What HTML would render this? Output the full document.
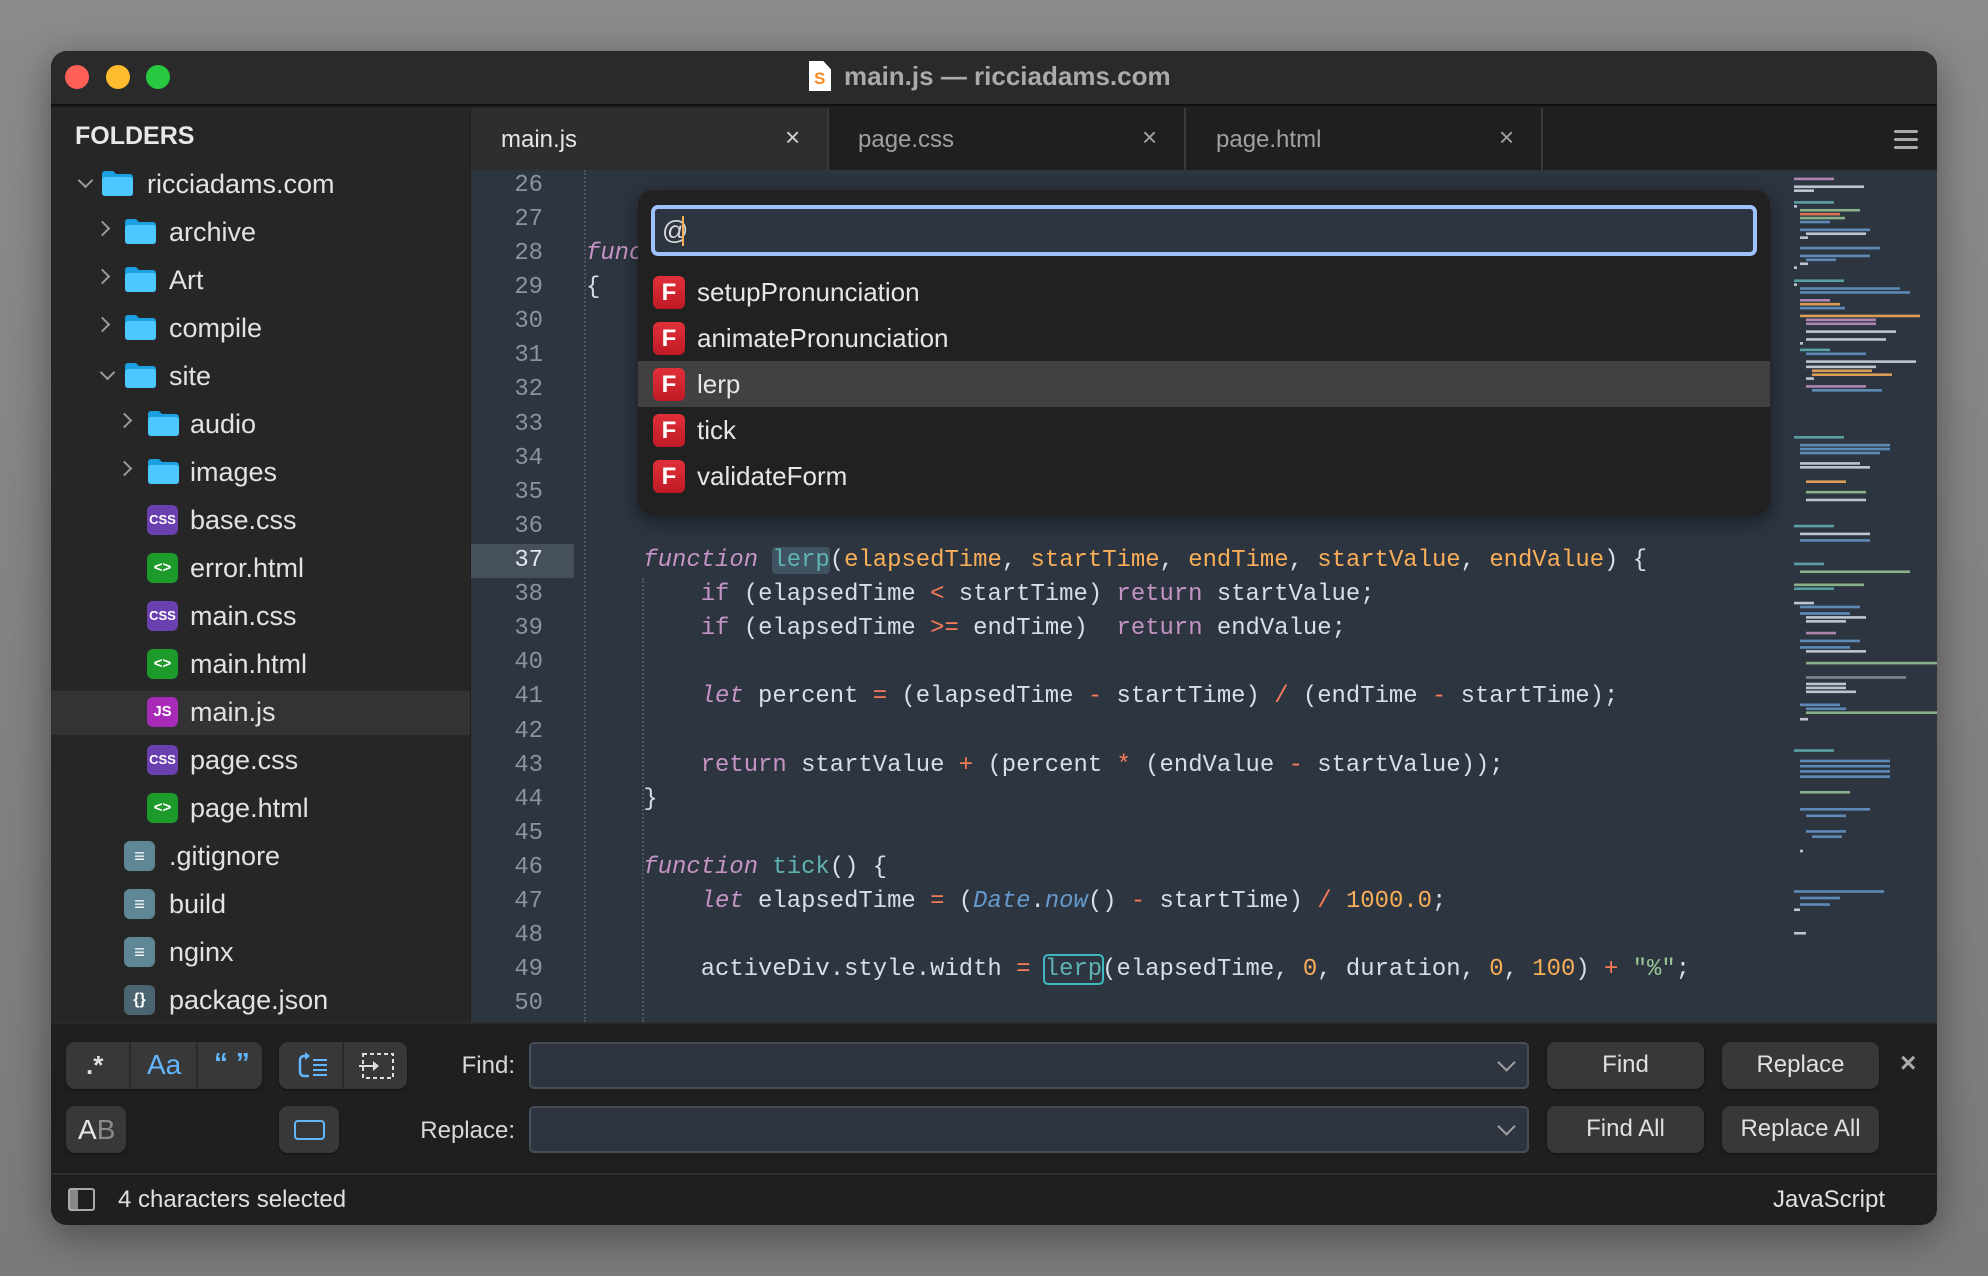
<!DOCTYPE html>
<html><head><meta charset="utf-8"><style>
*{margin:0;padding:0;box-sizing:border-box}
body{width:1988px;height:1276px;background:linear-gradient(#8b8b8b,#7a7a7a);position:relative;overflow:hidden;font-family:"Liberation Sans",sans-serif}
.a{position:absolute}
#win{left:51px;top:51px;width:1886px;height:1174px;border-radius:16px;overflow:hidden;background:#1f1f1f;box-shadow:0 10px 40px rgba(0,0,0,.4)}
.tl{position:absolute;top:14px;width:24px;height:24px;border-radius:50%}
.row{position:absolute;left:0;width:419px;height:44px;color:#e2e2e2;font-size:27px;line-height:44px;white-space:nowrap}
.chev{position:absolute;top:13px;width:11px;height:11px;border-right:2.5px solid #9a9a9a;border-bottom:2.5px solid #9a9a9a}
.fold{position:absolute;top:8px;width:33px;height:26px}
.fic{position:absolute;top:7px;width:31px;height:30px;border-radius:6px;color:#fff;font-size:15px;font-weight:bold;text-align:center;line-height:30px}
.code{position:absolute;left:535px;font-family:"Liberation Mono",monospace;font-size:23.9px;white-space:pre;color:#d8dee9;height:34px;line-height:34px}
.ln{position:absolute;left:420px;width:72px;text-align:right;font-family:"Liberation Mono",monospace;font-size:23.9px;color:#8a949f;height:34px;line-height:34px}
.k{color:#c594c5}.i{font-style:italic}.f{color:#5fb3b3}.p{color:#f9ae58}.o{color:#f97b58}.s{color:#99c794}.b{color:#6699cc}
.item{position:absolute;left:0;width:1132px;height:46px}
.F{position:absolute;left:15px;top:7px;width:32px;height:33px;border-radius:6px;background:linear-gradient(#e0303a,#c01a26);color:#fff;font-weight:bold;font-size:24px;text-align:center;line-height:33px}
.it{position:absolute;left:59px;top:0;line-height:46px;font-size:26px;color:#e6e6e6}
.btn{position:absolute;background:#383838;border-radius:9px;box-shadow:0 1px 2px rgba(0,0,0,.5)}
.tb{position:absolute;background:#383838;border-radius:9px;color:#e0e0e0;font-size:24px;text-align:center;line-height:46px;box-shadow:0 1px 2px rgba(0,0,0,.5)}
.inp{position:absolute;left:478px;width:1000px;height:47px;background:#2e3540;border:2px solid #454d58;border-radius:5px}
.dd{position:absolute;right:14px;top:12px;width:13px;height:13px;border-right:2.5px solid #a0a0a0;border-bottom:2.5px solid #a0a0a0;transform:rotate(45deg)}
.lbl{position:absolute;right:1422px;color:#d8d8d8;font-size:24px}
</style></head><body>
<div id="win" class="a">
 <div class="a" style="left:0;top:0;width:1886px;height:55px;background:#2a2a2a;border-bottom:2px solid #111"></div>
 <div class="tl" style="left:14px;background:#fe5f57"></div>
 <div class="tl" style="left:55px;background:#febc2e"></div>
 <div class="tl" style="left:95px;background:#28c840"></div>
 <div class="a" style="left:758px;top:10px;width:22px;height:30px;background:#fff;clip-path:polygon(0 0,65% 0,100% 28%,100% 100%,0 100%)"></div>
 <div class="a" style="left:763px;top:18px;color:#f58a1f;font-weight:bold;font-size:17px">S</div>
 <div class="a" style="left:793px;top:10px;font-size:26px;font-weight:bold;color:#aaaaaa">main.js — ricciadams.com</div>

 <div class="a" style="left:0;top:57px;width:419px;height:914px;background:#262626"></div>
 <div class="a" style="left:24px;top:71px;font-size:25px;font-weight:bold;color:#e8e8e8">FOLDERS</div>
 <div class="a" style="left:0;top:640px;width:419px;height:44px;background:#333"></div>

 <div class="row" style="top:111px"><div class="chev" style="left:29px;transform:rotate(45deg)"></div><svg class="fold" style="left:50px" viewBox="0 0 33 26"><path d="M1 4a3 3 0 0 1 3-3h8l3 3h14a3 3 0 0 1 3 3v16a3 3 0 0 1-3 3H4a3 3 0 0 1-3-3z" fill="#1a9fe0"/><rect x="1" y="7" width="31" height="19" rx="3" fill="#4dc8ff"/></svg><span style="position:absolute;left:96px">ricciadams.com</span></div>
 <div class="row" style="top:159px"><div class="chev" style="left:46px;transform:rotate(-45deg)"></div><svg class="fold" style="left:73px" viewBox="0 0 33 26"><path d="M1 4a3 3 0 0 1 3-3h8l3 3h14a3 3 0 0 1 3 3v16a3 3 0 0 1-3 3H4a3 3 0 0 1-3-3z" fill="#1a9fe0"/><rect x="1" y="7" width="31" height="19" rx="3" fill="#4dc8ff"/></svg><span style="position:absolute;left:118px">archive</span></div>
 <div class="row" style="top:207px"><div class="chev" style="left:46px;transform:rotate(-45deg)"></div><svg class="fold" style="left:73px" viewBox="0 0 33 26"><path d="M1 4a3 3 0 0 1 3-3h8l3 3h14a3 3 0 0 1 3 3v16a3 3 0 0 1-3 3H4a3 3 0 0 1-3-3z" fill="#1a9fe0"/><rect x="1" y="7" width="31" height="19" rx="3" fill="#4dc8ff"/></svg><span style="position:absolute;left:118px">Art</span></div>
 <div class="row" style="top:255px"><div class="chev" style="left:46px;transform:rotate(-45deg)"></div><svg class="fold" style="left:73px" viewBox="0 0 33 26"><path d="M1 4a3 3 0 0 1 3-3h8l3 3h14a3 3 0 0 1 3 3v16a3 3 0 0 1-3 3H4a3 3 0 0 1-3-3z" fill="#1a9fe0"/><rect x="1" y="7" width="31" height="19" rx="3" fill="#4dc8ff"/></svg><span style="position:absolute;left:118px">compile</span></div>
 <div class="row" style="top:303px"><div class="chev" style="left:51px;transform:rotate(45deg)"></div><svg class="fold" style="left:73px" viewBox="0 0 33 26"><path d="M1 4a3 3 0 0 1 3-3h8l3 3h14a3 3 0 0 1 3 3v16a3 3 0 0 1-3 3H4a3 3 0 0 1-3-3z" fill="#1a9fe0"/><rect x="1" y="7" width="31" height="19" rx="3" fill="#4dc8ff"/></svg><span style="position:absolute;left:118px">site</span></div>
 <div class="row" style="top:351px"><div class="chev" style="left:68px;transform:rotate(-45deg)"></div><svg class="fold" style="left:96px" viewBox="0 0 33 26"><path d="M1 4a3 3 0 0 1 3-3h8l3 3h14a3 3 0 0 1 3 3v16a3 3 0 0 1-3 3H4a3 3 0 0 1-3-3z" fill="#1a9fe0"/><rect x="1" y="7" width="31" height="19" rx="3" fill="#4dc8ff"/></svg><span style="position:absolute;left:139px">audio</span></div>
 <div class="row" style="top:399px"><div class="chev" style="left:68px;transform:rotate(-45deg)"></div><svg class="fold" style="left:96px" viewBox="0 0 33 26"><path d="M1 4a3 3 0 0 1 3-3h8l3 3h14a3 3 0 0 1 3 3v16a3 3 0 0 1-3 3H4a3 3 0 0 1-3-3z" fill="#1a9fe0"/><rect x="1" y="7" width="31" height="19" rx="3" fill="#4dc8ff"/></svg><span style="position:absolute;left:139px">images</span></div>
 <div class="row" style="top:447px"><div class="fic" style="left:96px;background:#6a3fb0;font-size:13px">CSS</div><span style="position:absolute;left:139px">base.css</span></div>
 <div class="row" style="top:495px"><div class="fic" style="left:96px;background:#1e9a2a">&lt;&gt;</div><span style="position:absolute;left:139px">error.html</span></div>
 <div class="row" style="top:543px"><div class="fic" style="left:96px;background:#6a3fb0;font-size:13px">CSS</div><span style="position:absolute;left:139px">main.css</span></div>
 <div class="row" style="top:591px"><div class="fic" style="left:96px;background:#1e9a2a">&lt;&gt;</div><span style="position:absolute;left:139px">main.html</span></div>
 <div class="row" style="top:639px"><div class="fic" style="left:96px;background:#a82ab8">JS</div><span style="position:absolute;left:139px">main.js</span></div>
 <div class="row" style="top:687px"><div class="fic" style="left:96px;background:#6a3fb0;font-size:13px">CSS</div><span style="position:absolute;left:139px">page.css</span></div>
 <div class="row" style="top:735px"><div class="fic" style="left:96px;background:#1e9a2a">&lt;&gt;</div><span style="position:absolute;left:139px">page.html</span></div>
 <div class="row" style="top:783px"><div class="fic" style="left:73px;background:#5f8796;font-size:18px">≡</div><span style="position:absolute;left:118px">.gitignore</span></div>
 <div class="row" style="top:831px"><div class="fic" style="left:73px;background:#5f8796;font-size:18px">≡</div><span style="position:absolute;left:118px">build</span></div>
 <div class="row" style="top:879px"><div class="fic" style="left:73px;background:#5f8796;font-size:18px">≡</div><span style="position:absolute;left:118px">nginx</span></div>
 <div class="row" style="top:927px;height:44px;overflow:hidden"><div class="fic" style="left:73px;background:#4a6470;font-size:16px">{}</div><span style="position:absolute;left:118px">package.json</span></div>

 <div class="a" style="left:419px;top:57px;width:1467px;height:62px;background:#1f1f1f"></div>
 <div class="a" style="left:420px;top:57px;width:356px;height:62px;background:#2e2e2e"></div>
 <div class="a" style="left:776px;top:57px;width:2px;height:62px;background:#3a3a3a"></div>
 <div class="a" style="left:1133px;top:57px;width:2px;height:62px;background:#3a3a3a"></div>
 <div class="a" style="left:1490px;top:57px;width:2px;height:62px;background:#3a3a3a"></div>
 <div class="a" style="left:450px;top:75px;font-size:24px;color:#e6e6e6">main.js</div>
 <div class="a" style="left:734px;top:71px;font-size:26px;color:#d0d0d0">×</div>
 <div class="a" style="left:807px;top:75px;font-size:24px;color:#a0a0a0">page.css</div>
 <div class="a" style="left:1091px;top:71px;font-size:26px;color:#a0a0a0">×</div>
 <div class="a" style="left:1165px;top:75px;font-size:24px;color:#a0a0a0">page.html</div>
 <div class="a" style="left:1448px;top:71px;font-size:26px;color:#a0a0a0">×</div>
 <div class="a" style="left:1843px;top:79px;width:24px;height:3px;background:#aaa;border-radius:2px;box-shadow:0 8px 0 #aaa,0 16px 0 #aaa"></div>

 <div class="a" style="left:420px;top:119px;width:1466px;height:852px;background:#2d3541"></div>
 <div class="a" style="left:420px;top:493px;width:103px;height:34px;background:#45505c"></div>
 <div class="a" style="left:533px;top:119px;height:852px;border-left:2px dotted #4a5461"></div>
 <div class="a" style="left:591px;top:527px;height:444px;border-left:2px dotted #4a5461"></div>

 <div class="ln" style="top:118px">26</div><div class="ln" style="top:152px">27</div><div class="ln" style="top:186px">28</div><div class="ln" style="top:220px">29</div><div class="ln" style="top:254px">30</div><div class="ln" style="top:288px">31</div><div class="ln" style="top:322px">32</div><div class="ln" style="top:357px">33</div><div class="ln" style="top:391px">34</div><div class="ln" style="top:425px">35</div><div class="ln" style="top:459px">36</div><div class="ln" style="top:493px;color:#e0e6ee">37</div><div class="ln" style="top:527px">38</div><div class="ln" style="top:561px">39</div><div class="ln" style="top:595px">40</div><div class="ln" style="top:629px">41</div><div class="ln" style="top:664px">42</div><div class="ln" style="top:698px">43</div><div class="ln" style="top:732px">44</div><div class="ln" style="top:766px">45</div><div class="ln" style="top:800px">46</div><div class="ln" style="top:834px">47</div><div class="ln" style="top:868px">48</div><div class="ln" style="top:902px">49</div><div class="ln" style="top:936px">50</div>

 <div class="code" style="top:186px"><span class="k i">function</span> <span class="f">animatePronunciation</span>()</div>
 <div class="code" style="top:220px">{</div>
 <div class="code" style="top:493px">    <span class="k i">function</span> <span class="f" style="background:#3f5360;border-radius:4px">lerp</span>(<span class="p">elapsedTime</span>, <span class="p">startTime</span>, <span class="p">endTime</span>, <span class="p">startValue</span>, <span class="p">endValue</span>) {</div>
 <div class="code" style="top:527px">        <span class="k">if</span> (elapsedTime <span class="o">&lt;</span> startTime) <span class="k">return</span> startValue;</div>
 <div class="code" style="top:561px">        <span class="k">if</span> (elapsedTime <span class="o">&gt;=</span> endTime)  <span class="k">return</span> endValue;</div>
 <div class="code" style="top:629px">        <span class="k i">let</span> percent <span class="o">=</span> (elapsedTime <span class="o">-</span> startTime) <span class="o">/</span> (endTime <span class="o">-</span> startTime);</div>
 <div class="code" style="top:698px">        <span class="k">return</span> startValue <span class="o">+</span> (percent <span class="o">*</span> (endValue <span class="o">-</span> startValue));</div>
 <div class="code" style="top:732px">    }</div>
 <div class="code" style="top:800px">    <span class="k i">function</span> <span class="f">tick</span>() {</div>
 <div class="code" style="top:834px">        <span class="k i">let</span> elapsedTime <span class="o">=</span> (<span class="b i">Date</span>.<span class="b i">now</span>() <span class="o">-</span> startTime) <span class="o">/</span> <span class="p">1000.0</span>;</div>
 <div class="code" style="top:902px">        activeDiv.style.width <span class="o">=</span> <span class="f" style="outline:2px solid #3fb8c0;outline-offset:0;border-radius:3px">lerp</span>(elapsedTime, <span class="p">0</span>, duration, <span class="p">0</span>, <span class="p">100</span>) <span class="o">+</span> <span class="s">"%"</span>;</div>

 <svg class="a" style="left:1741px;top:124px" width="145" height="770" viewBox="0 0 145 590" preserveAspectRatio="none">
  <g opacity=".85">
  <rect x="2" y="2" width="40" height="2" fill="#c594c5"/><rect x="2" y="8" width="70" height="2" fill="#d8dee9"/><rect x="2" y="11" width="20" height="2" fill="#d8dee9"/>
  <rect x="2" y="20" width="40" height="2" fill="#5fb3b3"/><rect x="2" y="23" width="3" height="2" fill="#d8dee9"/>
  <rect x="8" y="26" width="60" height="2" fill="#99c794"/><rect x="8" y="29" width="40" height="2" fill="#f97b58"/><rect x="8" y="32" width="45" height="2" fill="#99c794"/><rect x="8" y="35" width="30" height="2" fill="#6699cc"/>
  <rect x="8" y="41" width="70" height="2" fill="#6699cc"/><rect x="14" y="44" width="60" height="2" fill="#d8dee9"/><rect x="8" y="47" width="8" height="2" fill="#d8dee9"/>
  <rect x="8" y="55" width="80" height="2" fill="#6699cc"/><rect x="8" y="61" width="70" height="2" fill="#6699cc"/><rect x="14" y="64" width="30" height="2" fill="#6699cc"/><rect x="8" y="67" width="8" height="2" fill="#d8dee9"/><rect x="2" y="70" width="3" height="2" fill="#d8dee9"/>
  <rect x="2" y="80" width="50" height="2" fill="#5fb3b3"/><rect x="2" y="83" width="3" height="2" fill="#d8dee9"/>
  <rect x="8" y="86" width="100" height="2" fill="#6699cc"/><rect x="8" y="89" width="110" height="2" fill="#6699cc"/>
  <rect x="8" y="95" width="30" height="2" fill="#c594c5"/><rect x="8" y="98" width="40" height="2" fill="#f9ae58"/><rect x="8" y="101" width="45" height="2" fill="#6699cc"/>
  <rect x="8" y="107" width="120" height="2" fill="#f9ae58"/><rect x="14" y="110" width="70" height="2" fill="#c594c5"/><rect x="14" y="113" width="70" height="2" fill="#c594c5"/>
  <rect x="14" y="119" width="90" height="2" fill="#d8dee9"/><rect x="14" y="125" width="80" height="2" fill="#d8dee9"/><rect x="8" y="128" width="3" height="2" fill="#d8dee9"/>
  <rect x="8" y="133" width="30" height="2" fill="#5fb3b3"/><rect x="14" y="136" width="60" height="2" fill="#6699cc"/><rect x="14" y="142" width="110" height="2" fill="#d8dee9"/>
  <rect x="14" y="146" width="70" height="2" fill="#d8dee9"/><rect x="20" y="149" width="60" height="2" fill="#f9ae58"/><rect x="20" y="152" width="80" height="2" fill="#f9ae58"/><rect x="14" y="155" width="8" height="2" fill="#d8dee9"/>
  <rect x="14" y="161" width="60" height="2" fill="#c594c5"/><rect x="20" y="164" width="70" height="2" fill="#6699cc"/>
  <rect x="2" y="200" width="50" height="2" fill="#5fb3b3"/><rect x="8" y="206" width="90" height="2" fill="#6699cc"/><rect x="8" y="209" width="90" height="2" fill="#6699cc"/><rect x="8" y="212" width="80" height="2" fill="#6699cc"/>
  <rect x="8" y="220" width="60" height="2" fill="#d8dee9"/><rect x="8" y="223" width="70" height="2" fill="#d8dee9"/>
  <rect x="14" y="234" width="40" height="2" fill="#f9ae58"/><rect x="14" y="242" width="60" height="2" fill="#99c794"/><rect x="14" y="248" width="60" height="2" fill="#d8dee9"/>
  <rect x="2" y="268" width="40" height="2" fill="#5fb3b3"/><rect x="8" y="274" width="70" height="2" fill="#d8dee9"/><rect x="8" y="279" width="70" height="2" fill="#6699cc"/>
  <rect x="2" y="297" width="30" height="2" fill="#5fb3b3"/><rect x="8" y="303" width="110" height="2" fill="#99c794"/>
  <rect x="2" y="313" width="70" height="2" fill="#99c794"/><rect x="2" y="316" width="40" height="2" fill="#5fb3b3"/>
  <rect x="2" y="327" width="20" height="2" fill="#d8dee9"/><rect x="8" y="330" width="60" height="2" fill="#6699cc"/><rect x="8" y="335" width="50" height="2" fill="#6699cc"/><rect x="14" y="338" width="60" height="2" fill="#d8dee9"/><rect x="14" y="341" width="40" height="2" fill="#d8dee9"/>
  <rect x="14" y="350" width="30" height="2" fill="#c594c5"/><rect x="8" y="356" width="60" height="2" fill="#6699cc"/><rect x="8" y="361" width="50" height="2" fill="#6699cc"/><rect x="14" y="364" width="60" height="2" fill="#d8dee9"/>
  <rect x="14" y="373" width="140" height="2" fill="#99c794"/><rect x="14" y="384" width="100" height="2" fill="#8a949f"/><rect x="14" y="389" width="40" height="2" fill="#d8dee9"/><rect x="14" y="392" width="40" height="2" fill="#d8dee9"/><rect x="14" y="395" width="50" height="2" fill="#d8dee9"/>
  <rect x="8" y="405" width="40" height="2" fill="#6699cc"/><rect x="14" y="408" width="40" height="2" fill="#6699cc"/><rect x="14" y="411" width="145" height="2" fill="#99c794"/><rect x="8" y="416" width="8" height="2" fill="#d8dee9"/>
  <rect x="2" y="440" width="40" height="2" fill="#5fb3b3"/><rect x="8" y="448" width="90" height="2" fill="#6699cc"/><rect x="8" y="452" width="90" height="2" fill="#6699cc"/><rect x="8" y="456" width="90" height="2" fill="#6699cc"/><rect x="8" y="460" width="90" height="2" fill="#6699cc"/>
  <rect x="8" y="472" width="50" height="2" fill="#99c794"/><rect x="8" y="485" width="70" height="2" fill="#6699cc"/><rect x="14" y="490" width="40" height="2" fill="#6699cc"/>
  <rect x="14" y="502" width="40" height="2" fill="#6699cc"/><rect x="20" y="506" width="30" height="2" fill="#6699cc"/><rect x="8" y="517" width="3" height="2" fill="#d8dee9"/>
  <rect x="2" y="548" width="90" height="2" fill="#6699cc"/><rect x="8" y="553" width="40" height="2" fill="#6699cc"/><rect x="8" y="558" width="30" height="2" fill="#6699cc"/><rect x="2" y="562" width="6" height="2" fill="#d8dee9"/>
  <rect x="2" y="580" width="12" height="2" fill="#d8dee9"/>
  </g>
 </svg>

 <div class="a" style="left:587px;top:139px;width:1132px;height:325px;background:#212121;border-radius:14px;overflow:hidden;box-shadow:0 6px 20px rgba(0,0,0,.45)">
  <div class="a" style="left:13px;top:15px;width:1106px;height:51px;background:#2d3540;border:4px solid #9cc2ff;border-radius:7px"></div>
  <div class="a" style="left:24px;top:22px;font-size:26px;color:#d8d8d8;line-height:36px">@</div>
  <div class="a" style="left:44px;top:26px;width:2px;height:30px;background:#f9ae58"></div>
  <div class="item" style="top:79px"><div class="F">F</div><div class="it">setupPronunciation</div></div>
  <div class="item" style="top:125px"><div class="F">F</div><div class="it">animatePronunciation</div></div>
  <div class="item" style="top:171px;background:#414141"><div class="F">F</div><div class="it">lerp</div></div>
  <div class="item" style="top:217px"><div class="F">F</div><div class="it">tick</div></div>
  <div class="item" style="top:263px"><div class="F">F</div><div class="it">validateForm</div></div>
 </div>

 <div class="a" style="left:0;top:971px;width:1886px;height:2px;background:#2a2a2a"></div>
 <div class="a" style="left:0;top:1122px;width:1886px;height:2px;background:#2e2e2e"></div>
 <div class="btn" style="left:15px;top:991px;width:196px;height:47px"></div>
 <div class="a" style="left:78px;top:991px;width:2px;height:47px;background:#2a2a2a"></div>
 <div class="a" style="left:145px;top:991px;width:2px;height:47px;background:#2a2a2a"></div>
 <div class="a" style="left:35px;top:999px;font-size:26px;color:#e0e0e0;font-weight:bold">.*</div>
 <div class="a" style="left:96px;top:998px;font-size:28px;color:#62b7ff">Aa</div>
 <div class="a" style="left:163px;top:996px;font-size:28px;color:#62b7ff;font-weight:bold">“ ”</div>
 <div class="btn" style="left:228px;top:991px;width:128px;height:47px"></div>
 <div class="a" style="left:291px;top:991px;width:2px;height:47px;background:#2a2a2a"></div>
 <svg class="a" style="left:244px;top:999px" width="40" height="32"><path d="M14 6H9a4 4 0 0 0-4 4v12a4 4 0 0 0 4 4h5" stroke="#62b7ff" stroke-width="2.5" fill="none"/><path d="M10 2l5 4-5 4z" fill="#62b7ff"/><path d="M18 10h14M18 15h14M18 20h14M18 25h14" stroke="#62b7ff" stroke-width="2"/></svg>
 <svg class="a" style="left:306px;top:1001px" width="40" height="30"><rect x="6" y="2" width="30" height="24" fill="none" stroke="#ddd" stroke-width="2" stroke-dasharray="4 3"/><path d="M2 14h16" stroke="#ddd" stroke-width="2"/><path d="M16 9l6 5-6 5z" fill="#ddd"/></svg>
 <div class="btn" style="left:15px;top:1055px;width:60px;height:47px"></div>
 <div class="a" style="left:27px;top:1063px;font-size:28px;color:#e8e8e8">A<span style="color:#8a8a8a">B</span></div>
 <div class="btn" style="left:228px;top:1055px;width:60px;height:47px"></div>
 <div class="a" style="left:243px;top:1069px;width:31px;height:20px;border:2.5px solid #62b7ff;border-radius:4px"></div>
 <div class="lbl" style="top:1001px">Find:</div>
 <div class="lbl" style="top:1066px">Replace:</div>
 <div class="inp" style="top:991px"><div class="dd"></div></div>
 <div class="inp" style="top:1055px"><div class="dd"></div></div>
 <div class="tb" style="left:1496px;top:991px;width:157px;height:47px">Find</div>
 <div class="tb" style="left:1671px;top:991px;width:157px;height:47px">Replace</div>
 <div class="tb" style="left:1496px;top:1055px;width:157px;height:47px">Find All</div>
 <div class="tb" style="left:1671px;top:1055px;width:157px;height:47px">Replace All</div>
 <div class="a" style="left:1849px;top:996px;font-size:28px;color:#aaa;font-weight:bold">×</div>

 <div class="a" style="left:17px;top:1137px;width:27px;height:23px;border:2.5px solid #aaa;border-radius:3px;background:linear-gradient(90deg,#888 35%,transparent 35%)"></div>
 <div class="a" style="left:67px;top:1135px;font-size:24px;color:#e0e0e0">4 characters selected</div>
 <div class="a" style="right:52px;top:1135px;font-size:24px;color:#e0e0e0">JavaScript</div>
</div>
</body></html>
